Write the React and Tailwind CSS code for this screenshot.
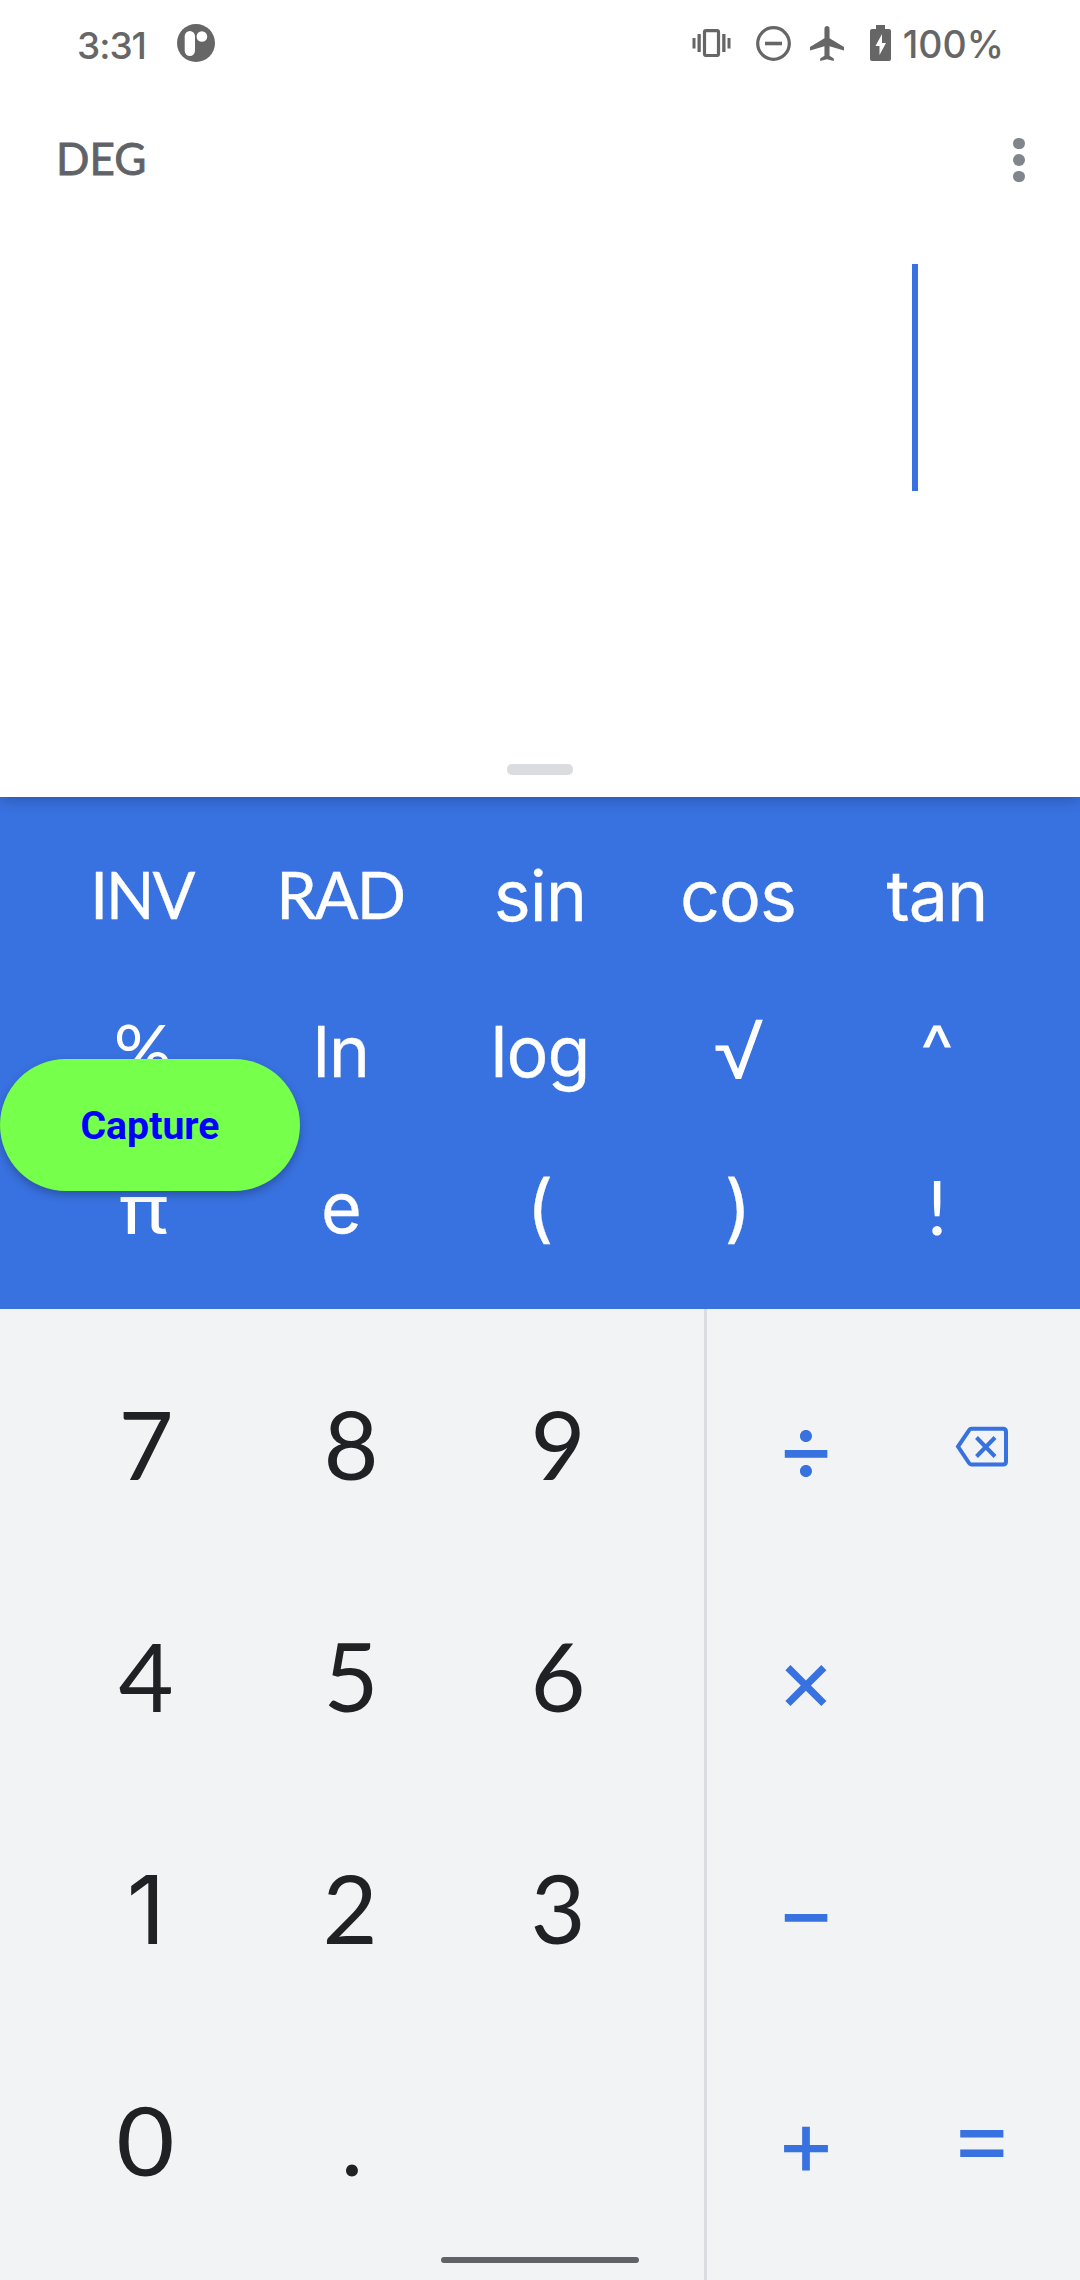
import React from "react";

const lato = "font-['Lato',sans-serif]";
const inter = "font-['Inter',sans-serif]";
const word = "font-['Inter',sans-serif] text-[70px] tracking-[-1px] [-webkit-text-stroke:0.300px_currentColor]";
const caps = "font-['Lato',sans-serif] text-[66px] -translate-y-[2px] tracking-[-2px] [-webkit-text-stroke:0.4px_currentColor]";
const percent = "font-['Lato',sans-serif] text-[73px] -translate-y-[2px] -translate-x-[1px]";
const paren = "font-['Inter',sans-serif] text-[74px] -translate-y-[1px] [-webkit-text-stroke:0.300px_currentColor]";

const functions = [
  ["INV", `${caps} scale-x-[0.96] -translate-x-[2px]`],
  ["RAD", `${caps} -translate-x-[2px] scale-x-[0.98]`],
  ["sin", word],
  ["cos", word],
  ["tan", `${word} translate-x-[1px]`],
  ["%", percent],
  ["ln", `${word} -translate-x-[1px]`],
  ["log", word],
  ["√", "font-['Liberation_Sans',sans-serif] text-[73px] scale-x-[1.200] [-webkit-text-stroke:1px_currentColor]"],
  ["^", `${inter} text-[72px] translate-x-[1px] -translate-y-[2px]`],
  ["π", `${inter} text-[68px] scale-x-[1.200] translate-y-[1px]`],
  ["e", `${word} -translate-x-[1px]`],
  ["(", paren],
  [")", paren],
  ["!", `${lato} text-[75px] -translate-y-[2px] translate-x-[1px]`],
];

const digit = "font-['Lato',sans-serif] -translate-y-[2px]";

const digits = [
  ["7", `${digit} translate-x-[1px]`], ["8", digit], ["9", `${digit} translate-x-[1px]`],
  ["4", `${digit} translate-x-[1px]`], ["5", digit], ["6", `${digit} translate-x-[1px]`],
  ["1", `${inter} translate-x-[1px]`], ["2", `${digit} -translate-x-[1px]`], ["3", `${digit} translate-x-[1px]`],
  ["0", `${digit} translate-x-[1px] scale-x-[1.060]`], [".", `${digit} translate-x-[1px]`],
];

function Backspace() {
  return (
    <svg className="h-[42px] w-[54px]" viewBox="0 0 54 42" fill="none" stroke="currentColor" strokeWidth="4">
      <path d="M16.500 2.800 H48 Q51 2.800 51 5.800 V35.500 Q51 38.500 48 38.500 H16.500 Q15 38.500 14 37 L3 20.600 L14 4.300 Q15 2.800 16.500 2.800 Z" />
      <path d="M21.500 11.500 L40 30.500 M40 11.500 L21.500 30.500" />
    </svg>
  );
}

const operators = [
  ["÷", ""], [<Backspace key="backspace" />, ""],
  ["×", "scale-[0.960]"], ["", ""],
  ["−", ""], ["", ""],
  ["+", "-translate-y-[1px]"], ["=", "-translate-y-[6px] scale-x-[1.050]"],
];

function StatusBar() {
  return (
    <div className="flex h-[86px] items-center justify-between pl-[77px] pr-[76px] text-[#666666]">
      <div className="flex items-center">
        <span className={`${inter} w-[100px] translate-y-[2px] text-[37px] font-medium leading-none tracking-[-1px]`}>3:31</span>
        <svg className="h-[38px] w-[38px]" viewBox="0 0 38 38">
          <circle cx="19" cy="19" r="19" fill="currentColor" />
          <rect x="7.700" y="7" width="10.300" height="25" rx="5.150" fill="#fff" />
          <circle cx="24.900" cy="12.500" r="5.300" fill="#fff" />
        </svg>
      </div>
      <div className="flex items-center">
        <svg className="h-[28px] w-[39px]" viewBox="0 0 39 28" fill="currentColor">
          <rect x="0.500" y="9" width="3" height="10.500" />
          <rect x="5.500" y="5" width="3.300" height="18" />
          <rect x="12.500" y="1.700" width="14" height="24.800" rx="1.500" fill="none" stroke="currentColor" strokeWidth="3.200" />
          <rect x="30.200" y="5" width="3.300" height="18" />
          <rect x="35.500" y="9" width="3" height="10.500" />
        </svg>
        <svg className="ml-[25px] h-[35px] w-[35px]" viewBox="0 0 35 35" fill="none" stroke="currentColor">
          <circle cx="17.500" cy="17.500" r="15.800" strokeWidth="3.200" />
          <path d="M9 17.500 H26" strokeWidth="3.600" />
        </svg>
        <svg className="ml-[19px] h-[35px] w-[34px]" viewBox="2 2 20 20" preserveAspectRatio="none" fill="currentColor">
          <path d="M22 16v-2l-8.500-5V3.500C13.500 2.670 12.830 2 12 2s-1.500.670-1.500 1.500V9L2 14v2l8.500-2.500V19L8 20.500V22l4-1 4 1v-1.500L13.500 19v-5.500L22 16z" />
        </svg>
        <svg className="ml-[26px] h-[36px] w-[21px]" viewBox="0 0 21 36" fill="currentColor">
          <path d="M6 0 H15 V4 H19 Q21 4 21 6 V34 Q21 36 19 36 H2 Q0 36 0 34 V6 Q0 4 2 4 H6 Z" />
          <path d="M12 9 L5.500 21 H9.500 V30 L16 18 H12 Z" fill="#fff" />
        </svg>
        <span className={`${inter} ml-[12px] translate-y-[2px] text-[37.500px] font-medium leading-none`}>100%</span>
      </div>
    </div>
  );
}

export default function App() {
  return (
    <div className="relative flex h-[2280px] w-[1080px] flex-col overflow-hidden bg-white">
      <div className="relative z-10 flex h-[797px] flex-col bg-white shadow-[0_2px_14px_rgba(0,0,0,0.25)]">
        <StatusBar />
        <div className="flex h-[148px] items-center justify-between pl-[56px] pr-[55px]">
          <span className={`${lato} -translate-y-[2px] text-[44px] leading-none text-[#5f6368] [-webkit-text-stroke:0.800px_currentColor]`}>DEG</span>
          <div className="flex flex-col gap-[5px]">
            <i className="size-[11.600px] rounded-full bg-[#80868b]" />
            <i className="size-[11.600px] rounded-full bg-[#80868b]" />
            <i className="size-[11.600px] rounded-full bg-[#80868b]" />
          </div>
        </div>
        <div className="mt-[30px] mr-[162px] h-[227px] w-[6px] self-end bg-[#3871e0]" />
        <div className="mt-auto mb-[22px] h-[11px] w-[66px] self-center rounded-[5px] bg-[#dadce0]" />
      </div>

      <div className="grid h-[512px] grid-cols-[repeat(5,198px)] grid-rows-[repeat(3,156px)] justify-center bg-[#3871e0] pt-[21px] text-white">
        {functions.map(([label, style]) => (
          <button key={label} className="flex items-center justify-center">
            <span className={`${style} leading-none`}>{label}</span>
          </button>
        ))}
      </div>

      <div className="flex h-[971px] bg-[#f1f3f4]">
        <div className="grid w-[704px] grid-cols-[repeat(3,206px)] grid-rows-[repeat(4,231.750px)] pl-[42px] pt-[21px] text-[#202124]">
          {digits.map(([label, style]) => (
            <button key={label} className="flex items-center justify-center">
              <span className={`${style} text-[95px] leading-none`}>{label}</span>
            </button>
          ))}
        </div>
        <div className="w-[3px] bg-[#dadce0]" />
        <div className={`${inter} grid grid-cols-[repeat(2,176px)] grid-rows-[repeat(4,231.750px)] pl-[11px] pt-[22px] text-[#3871e0]`}>
          {operators.map(([label, style], i) => (
            <button key={i} className="flex items-center justify-center">
              <span className={`${style} text-[93px] leading-none`}>{label}</span>
            </button>
          ))}
        </div>
      </div>

      <button className="absolute left-0 top-[1059px] z-20 h-[132px] w-[300px] rounded-full bg-[#76ff4b] pt-[3px] font-['Roboto',sans-serif] text-[39.200px] font-bold leading-none text-[#0000ff] shadow-[0_4px_9px_rgba(0,0,0,0.25)]">
        Capture
      </button>
      <div className="absolute bottom-[17px] left-[441px] h-[6px] w-[198px] rounded-[3px] bg-[#5f6368]" />
    </div>
  );
}
